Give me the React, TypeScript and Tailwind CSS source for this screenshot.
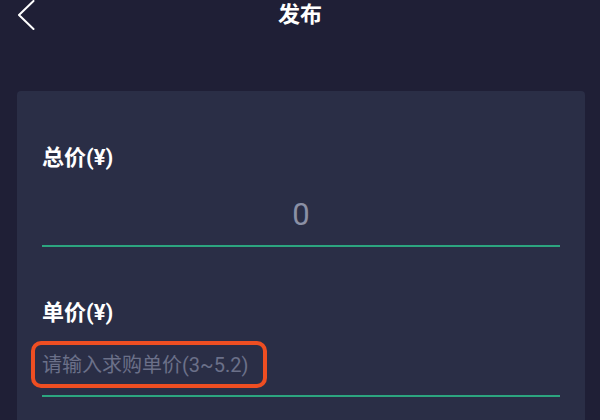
import React from "react";

export default function App() {
  return (
    <div className="w-[600px] h-[420px] overflow-hidden bg-[#1f1f36] font-['Roboto','Noto_Sans_CJK_SC',sans-serif]">
      <div className="grid h-[30px] grid-cols-[1fr_auto_1fr] items-center">
        <div className="flex items-center pl-[17px]">
          <svg width="18" height="30" viewBox="0 0 18 30" fill="none">
            <path d="M16.5 1 L2 15 L16.5 29" stroke="#ffffff" strokeWidth="2" strokeLinecap="round" strokeLinejoin="round" />
          </svg>
        </div>
        <div className="text-[22px] font-bold leading-[30px] text-white">发布</div>
        <div />
      </div>
      <div className="mt-[61px] ml-[17px] w-[568px] rounded-[4px] bg-[#2a2e46] px-[25px] pt-[53px] pb-[40px]">
        <div className="h-[28px] text-[22px] font-bold leading-[28px] text-white">总价(¥)</div>
        <div className="flex h-[75px] items-center justify-center border-b-2 border-[#2ca57f] pt-[12px]">
          <span className="text-[31px] leading-[40px] text-[#8b90a5]">0</span>
        </div>
        <div className="mt-[52px] h-[28px] text-[22px] font-bold leading-[28px] text-white">单价(¥)</div>
        <div className="flex h-[70px] items-center border-b-2 border-[#2ca57f] pt-[8px]">
          <span className="relative text-[20px] leading-[24px] text-[#6b7089]">
            请输入求购单价(3~5.2)
            <span className="absolute -left-[11px] -top-[12px] h-[47px] w-[236px] rounded-[10px] border-4 border-[#ee4e22]" />
          </span>
        </div>
      </div>
    </div>
  );
}
